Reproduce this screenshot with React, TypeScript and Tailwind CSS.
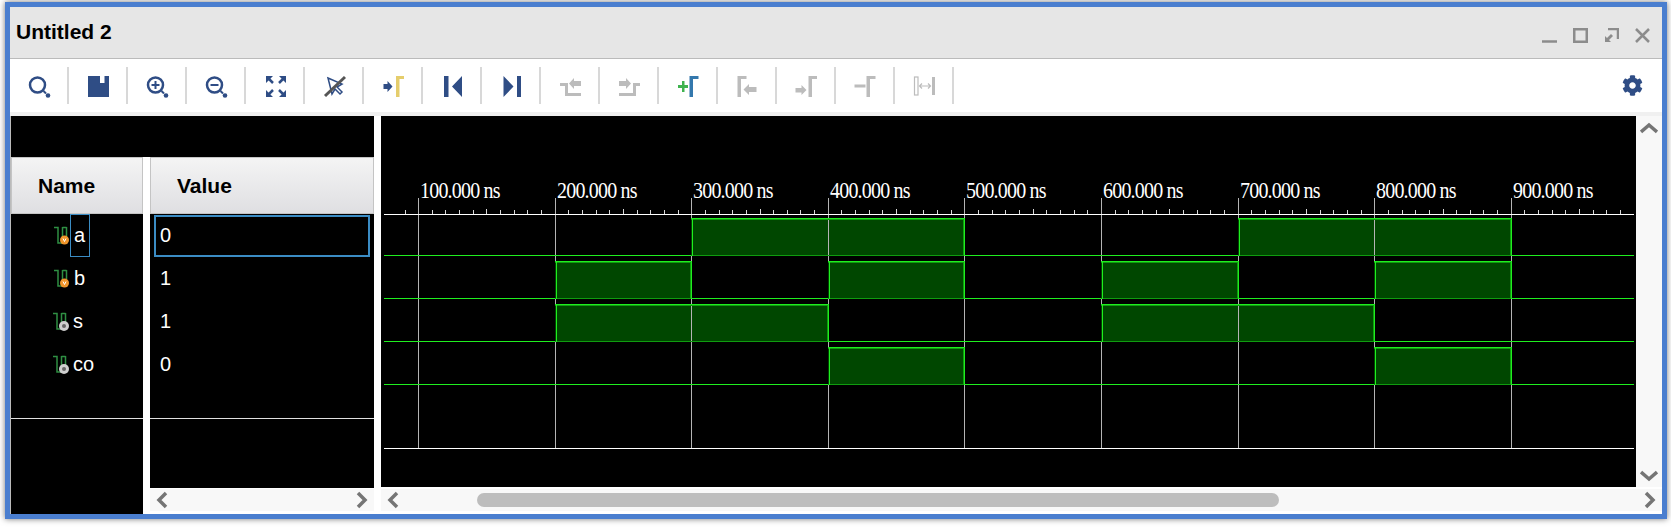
import { FaCog } from "react-icons/fa";

const BLUE = "#2f4d85";
const GRAY = "#bcbcbc";

/* ── Toolbar icons, all in one 24x24 box ── */
function Glass({ mark }: { mark?: "plus" | "minus" }) {
  return (
    <>
      <circle cx="10.500" cy="11" r="7.500" fill="none" stroke={BLUE} strokeWidth="2.500" />
      <path d="M16.500 17l2.500 2.500" stroke={BLUE} strokeWidth="2" />
      <circle cx="21" cy="21.500" r="2.300" fill={BLUE} />
      {mark && <path d="M6.500 11h8" stroke={BLUE} strokeWidth="2" />}
      {mark === "plus" && <path d="M10.500 7v8" stroke={BLUE} strokeWidth="2" />}
    </>
  );
}

const icons: React.ReactNode[] = [
  <Glass key="search" />,
  <path key="save" fillRule="evenodd" fill={BLUE} d="M2 2h21v21H2zM14 2v7h4.500V2z" />,
  <Glass key="in" mark="plus" />,
  <Glass key="out" mark="minus" />,
  <g key="fit" fill={BLUE} stroke={BLUE}>
    <path strokeWidth="0" d="M3 2h7L3 9zM23 2h-7l7 7zM3 23h7l-7-7zM23 23h-7l7-7z" />
    <path strokeWidth="2.500" fill="none" d="M5 4l5 5M21 4l-5 5M5 21l5-5M21 21l-5-5" />
  </g>,
  <g key="pin">
    <path d="M6 4l14 6-5 3 5 5-2 2-5-5-3 5z" fill="#fff" stroke={BLUE} strokeWidth="1.500" />
    <path d="M3 22L23 3" stroke="#555" strokeWidth="3" />
  </g>,
  <g key="cursor">
    <path d="M2.500 10h4V7l5 5.500-5 5.500v-3h-4z" fill={BLUE} />
    <path d="M15 2h8v3h-4.500v18H15z" fill="#e5cd6c" />
  </g>,
  <path key="prev" fill={BLUE} d="M4 2h4.500v21H4zM22 2v21L12 12.500z" />,
  <path key="next" fill={BLUE} d="M22 2h-4v21h4zM4.500 2v21l10-10.500z" />,
  <path key="fall" fill={GRAY} d="M2 9h8v10h13v3H7V12H2zM23 7h-7V4l-5 5.500 5 5.500v-3h7z" />,
  <path key="rise" fill={GRAY} d="M2 19h14V9h7v3h-4v10H2zM2 7h7V4l5 5.500-5 5.500v-3H2z" />,
  <g key="add">
    <path d="M6 7h2.500v4H12v3H8.500v4H6v-4H2v-3h4z" fill="#3fb34f" />
    <path d="M13.500 2h9v3H17v18h-3.500z" fill="#3478ad" />
  </g>,
  <path key="last" fill={GRAY} d="M2.500 2h9v3H6v18H2.500zM8.500 15.500l5.500-5.500v3h7.500v5H14v3z" />,
  <path key="first" fill={GRAY} d="M14.500 2h8.500v3h-5v18h-3.500zM1.500 14h6v-3l5 5-5 5v-2.500h-6z" />,
  <path key="minus" fill={GRAY} d="M13.500 2h9v3H17v18h-3.500zM1.500 10.500h11v3h-11z" />,
  <g key="span">
    <rect x="2.500" y="3" width="3.500" height="18" fill="none" stroke={GRAY} strokeWidth="1.200" />
    <path d="M7.500 12h11M10 9.500L7.500 12l2.500 2.500M16 9.500l2.500 2.500-2.500 2.500" fill="none" stroke={GRAY} strokeWidth="1.200" />
    <path d="M20 3h3v18h-3z" fill={GRAY} />
  </g>,
];

function Chevron({ dir }: { dir: "left" | "right" | "up" | "down" }) {
  const d = {
    left: "M10 2L3 9l7 7",
    right: "M3 2l7 7-7 7",
    up: "M1 10l8-7 8 7",
    down: "M1 2l8 7 8-7",
  }[dir];
  const horizontal = dir === "left" || dir === "right";
  return (
    <svg width={horizontal ? 13 : 18} height={horizontal ? 18 : 12} fill="none" className="shrink-0">
      <path d={d} stroke="#757575" strokeWidth="3.500" />
    </svg>
  );
}

function WindowControls() {
  return (
    <div className="flex items-center gap-[16px] pr-[12px] pt-[6px]">
      <svg width="15" height="15"><path d="M0 13.500h15" stroke="#8c8c8c" strokeWidth="2.500" /></svg>
      <svg width="15" height="15"><rect x="1.250" y="1.250" width="12.500" height="12.500" fill="none" stroke="#8c8c8c" strokeWidth="2.500" /></svg>
      <svg width="15" height="15">
        <path d="M4 1h10v10" fill="none" stroke="#8c8c8c" strokeWidth="2.500" />
        <path d="M1 8v6h6L5 12l4-4-2-2-4 4z" fill="#8c8c8c" />
      </svg>
      <svg width="15" height="15"><path d="M1 1l13 13M14 1L1 14" stroke="#8c8c8c" strokeWidth="2.500" /></svg>
    </div>
  );
}

/* Green bracket with the orange "v" (input) or gray ring (output) */
function SignalIcon({ output }: { output?: boolean }) {
  return (
    <svg width="19" height="20" className={output ? "-ml-[1px]" : ""}>
      <path
        d="M1 1.500h4V17h9M9.500 1v12M13.500 1v9M9.500 1.500h4"
        fill="none"
        stroke="#2f8f43"
        strokeWidth="1.500"
      />
      {output ? (
        <>
          <circle cx="12" cy="14" r="5" fill="#cfcfcf" />
          <circle cx="12" cy="14" r="2" fill="#666" />
        </>
      ) : (
        <>
          <circle cx="11.500" cy="14" r="4.500" fill="#f0952b" />
          <path d="M10 12.500l1.500 3 1.500-3" fill="none" stroke="#fff" strokeWidth="1" />
        </>
      )}
    </svg>
  );
}

const signals = [
  { name: "a", value: "0", output: false, highs: [[3, 5], [7, 9]], low: 139 },
  { name: "b", value: "1", output: false, highs: [[2, 3], [4, 5], [6, 7], [8, 9]], low: 182 },
  { name: "s", value: "1", output: true, highs: [[2, 4], [6, 8]], low: 225 },
  { name: "co", value: "0", output: true, highs: [[4, 5], [8, 9]], low: 268 },
];

const marks = [1, 2, 3, 4, 5, 6, 7, 8, 9];
const STEP = 136.6;
const markX = (n: number) => Math.round(37 + (n - 1) * STEP);

const BRIGHT = "#1fee1f";
const DIM = "#0f9c0f";

function Waves() {
  const ticks = Array.from({ length: 91 }, (_, i) => i);
  return (
    <svg width="1255" height="371" shapeRendering="crispEdges" className="block">
      {marks.map((n) => (
        <g key={n}>
          <line x1={markX(n) + 0.5} y1="82" x2={markX(n) + 0.5} y2="332" stroke="#b4b4b4" />
          <text
            transform={`translate(${markX(n) + 2} 82) scale(1 1.120)`}
            fill="#fff"
            fontSize="20"
            letterSpacing="-0.800"
            fontFamily='"Liberation Serif", serif'
            shapeRendering="auto"
          >
            {n}00.000 ns
          </text>
        </g>
      ))}
      {ticks.map((i) => {
        if (i % 10 === 0) return null;
        const x = Math.round(37 + i * (STEP / 10)) + 0.5;
        if (x > 1250) return null;
        return <line key={i} x1={x} y1={i % 5 === 0 ? 93 : 94} x2={x} y2="98" stroke="#d8d8d8" />;
      })}
      <line x1="24.500" y1="94" x2="24.500" y2="98" stroke="#d8d8d8" />
      <line x1="3" y1="98.500" x2="1253" y2="98.500" stroke="#fff" />
      {signals.map((s) => (
        <g key={s.name}>
          <line x1="3" y1={s.low + 0.5} x2="1253" y2={s.low + 0.5} stroke={BRIGHT} />
          {s.highs.map(([from, to]) => {
            const x1 = markX(from);
            const x2 = markX(to);
            const top = s.low - 37;
            const width = x2 - x1;
            return (
              <g key={from}>
                <rect x={x1} y={top} width={width} height="37" fill="#004700" />
                <rect x={x1} y={s.low} width={width} height="1" fill={DIM} />
                {to - from === 2 && (
                  <rect x={markX(from + 1)} y={top} width="1" height="37" fill="#b4b4b4" />
                )}
                <rect x={x1} y={top + 1} width={width} height="1" fill={DIM} />
                <rect x={x1} y={top} width={width + 1} height="1" fill={BRIGHT} />
                <rect x={x1 + 1} y={top} width="1" height="38" fill={BRIGHT} />
                <rect x={x2 - 1} y={top + 1} width="1" height="37" fill={DIM} />
                <rect x={x2} y={top} width="1" height="38" fill={BRIGHT} />
              </g>
            );
          })}
        </g>
      ))}
      <line x1="3" y1="332.500" x2="1253" y2="332.500" stroke="#fff" />
    </svg>
  );
}

function HeaderCell({ label, className }: { label: string; className: string }) {
  return (
    <div
      className={`flex h-[57px] shrink-0 items-center border border-[#c4c4c4] bg-gradient-to-b from-[#f4f4f4] to-[#dfdfe2] text-[21px] font-bold text-black ${className}`}
    >
      {label}
    </div>
  );
}

export default function App() {
  return (
    <div
      className="h-[527px] w-[1671px] overflow-hidden bg-white pb-[8px] pl-[5px] pr-[4px] pt-[2px]"
      style={{ fontFamily: '"Liberation Sans", Arial, sans-serif' }}
    >
      <div className="flex h-full flex-col border-[5px] border-[#4a7ecf] shadow-[0_0_6px_#777]">
        {/* Title bar */}
        <div className="flex h-[52px] shrink-0 items-center justify-between border-b border-[#bbbbbb] bg-[#e6e6e6]">
          <span className="pb-[2px] pl-[6px] text-[21px] font-bold text-black">Untitled 2</span>
          <WindowControls />
        </div>

        {/* Toolbar */}
        <div className="flex h-[53px] shrink-0 items-center bg-white">
          {icons.map((icon, i) => (
            <div key={i} className="flex h-[37px] w-[59px] shrink-0 items-center justify-center border-r-2 border-[#d8d8d8]">
              <svg width="24" height="24" viewBox="0 0 24 24" className="shrink-0">
                {icon}
              </svg>
            </div>
          ))}
          <div className="ml-auto pr-[19px]">
            <FaCog size={21} color={BLUE} />
          </div>
        </div>
        <div className="h-[4px] shrink-0 bg-[#f0f0f0]" />

        {/* Panels */}
        <div className="flex min-h-0 flex-1 bg-white">
          {/* Name and value columns, under one black band */}
          <div className="flex w-[364px] shrink-0 flex-col border-l border-[#bbbbbb]">
            <div className="h-[41px] shrink-0 bg-black" />
            <div className="flex min-h-0 flex-1">
              <div className="flex w-[132px] shrink-0 flex-col bg-black">
                <HeaderCell label="Name" className="pl-[26px]" />
                <div className="h-[204px] shrink-0">
                  {signals.map((s, i) => (
                    <div key={s.name} className="flex h-[43px] items-center pl-[42px]">
                      <SignalIcon output={s.output} />
                      <span
                        className={`ml-[-2px] flex h-[43px] items-center border pb-[2px] pl-[3px] pr-[4px] text-[20px] text-white ${
                          i === 0 ? "border-[#3b8cc4]" : "border-transparent"
                        }`}
                      >
                        {s.name}
                      </span>
                    </div>
                  ))}
                </div>
                <div className="h-px shrink-0 bg-[#e0e0e0]" />
              </div>

              <div className="ml-[7px] flex w-[224px] shrink-0 flex-col">
                <div className="flex h-[331px] shrink-0 flex-col bg-black">
                  <HeaderCell label="Value" className="pl-[26px]" />
                  <div className="h-[204px] shrink-0">
                    {signals.map((s, i) => (
                      <div key={s.name} className="flex h-[43px] items-center pl-[4px]">
                        <div
                          className={`flex h-[42px] w-[216px] items-center border-2 pb-[2px] pl-[4px] text-[20px] text-white ${
                            i === 0 ? "border-[#3b8cc4]" : "border-transparent"
                          }`}
                        >
                          {s.value}
                        </div>
                      </div>
                    ))}
                  </div>
                  <div className="h-px shrink-0 bg-[#e0e0e0]" />
                </div>
                <div className="mt-[1px] flex h-[22px] shrink-0 items-center justify-between bg-[#f8f8f8] px-[6px]">
                  <Chevron dir="left" />
                  <Chevron dir="right" />
                </div>
              </div>
            </div>
          </div>

          {/* Wave panel */}
          <div className="ml-[7px] flex min-w-0 flex-1 flex-col">
            <div className="flex h-[371px] shrink-0">
              <div className="w-[1255px] shrink-0 bg-black">
                <Waves />
              </div>
              <div className="flex flex-1 flex-col items-center justify-between bg-[#f8f8f8] pb-[5px] pt-[6px]">
                <Chevron dir="up" />
                <Chevron dir="down" />
              </div>
            </div>
            <div className="mt-[2px] flex h-[22px] shrink-0 items-center bg-[#f8f8f8] pl-[6px] pr-[6px]">
              <Chevron dir="left" />
              <div className="ml-[77px] h-[14px] w-[802px] shrink-0 rounded-[7px] bg-[#bdbdbd]" />
              <div className="ml-auto">
                <Chevron dir="right" />
              </div>
            </div>
          </div>
        </div>
      </div>
    </div>
  );
}
